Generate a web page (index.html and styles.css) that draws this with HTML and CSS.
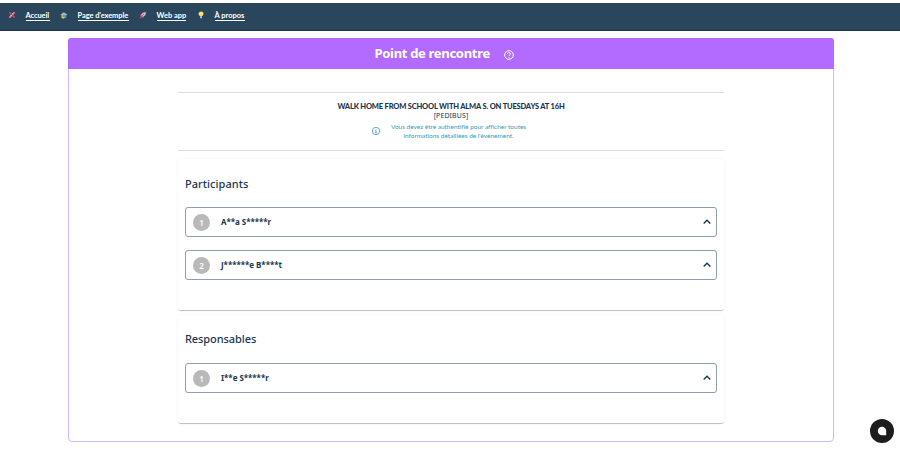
FILE: index.html
```html
<!DOCTYPE html>
<html lang="fr">
<head>
<meta charset="utf-8">
<title>Point de rencontre</title>
<link rel="stylesheet" href="styles.css">
</head>
<body>
<nav class="nav">
  <svg class="nav-icon" viewBox="0 0 8 8"><path d="M1.5 6.5 6.3 1.5" stroke="#e9edf2" stroke-width="1.4"/><path d="M1.4 1.3 6.6 6.5" stroke="#df4262" stroke-width="1.6"/><path d="M5.2 2.7 6.7 1.2M1.2 6.8 2.7 5.3" stroke="#e35c78" stroke-width="1.5"/></svg>
  <a class="nav-link home">Accueil</a>
  <svg class="nav-icon" viewBox="0 0 8 8"><path d="M.4 3.7 3.7 1.2 7.4 3.6 6.4 4.5H1.600Z" fill="#9fb8c4"/><path d="M3 4.300h3.200v2.100l-1.500.8L3 6.500Z" fill="#6b98b0"/><path d="M2.300 4.200 2 6.400 4.300 7" stroke="#e3c35b" stroke-width="1.300"/></svg>
  <a class="nav-link page">Page d'exemple</a>
  <svg class="nav-icon" viewBox="0 0 8 8"><path d="M1.8 4 4 1.7 7.3.8 6.3 4.1 4 6.1Z" fill="#d9dce6"/><path d="M1.8 3.4.4 5l1.8-.2M4.2 5.5 3 7.4l2.3-1.3M5.5 1.3 7.4.7 6.8 2.7" fill="#df4868"/><path d="M1.2 6.9 3.4 4.5 4.7 3.2" stroke="#e65473" stroke-width="1.1"/><circle cx="4.9" cy="3.1" r=".7" fill="#5b8caf"/></svg>
  <a class="nav-link app">Web app</a>
  <svg class="nav-icon" viewBox="0 0 8 8"><path d="M3 5C1.4 3.9 1 1 4 .8s2.700 3.100 1 4.200Z" fill="#ffe36c" stroke="#f3cd50" stroke-width=".5"/><path d="M3.200 5.200h1.700v2H3.200Z" fill="#cbd5d7"/></svg>
  <a class="nav-link about">À propos</a>
</nav>
<main class="card">
  <header class="card-header">
    <h1>Point de rencontre</h1>
    <svg class="help" viewBox="0 0 10 10"><circle cx="5" cy="5" r="4.300"/><path d="M3.500 4C3.600 2.100 6.500 2.200 6.500 3.900 6.500 5 5 4.900 5 6.100M5 7v.9"/></svg>
  </header>
  <div class="content">
    <section class="event">
      <h2>WALK HOME FROM SCHOOL WITH ALMA S. ON TUESDAYS AT 16H</h2>
      <p class="kind">[PEDIBUS]</p>
      <div class="notice">
        <svg class="info" viewBox="0 0 10 10"><circle cx="5" cy="5" r="3.700"/><path d="M5 2.800v.8M4.300 4.500H5v2.300M4.200 6.900h1.700"/></svg>
        <p>Vous devez être authentifié pour afficher toutes<br>informations détaillées de l'événement.</p>
      </div>
    </section>
    <section class="group participants">
      <h3>Participants</h3>
      <div class="person"><span class="number">1</span><span class="name">A**a S*****r</span><svg class="chevron" viewBox="0 0 10 10"><path d="M1.700 6.500 5 3.300l3.300 3.200"/></svg></div>
      <div class="person"><span class="number">2</span><span class="name">J******e B****t</span><svg class="chevron" viewBox="0 0 10 10"><path d="M1.700 6.500 5 3.300l3.300 3.200"/></svg></div>
    </section>
    <section class="group leaders">
      <h3 class="leaders-title">Responsables</h3>
      <div class="person"><span class="number">1</span><span class="name">I**e S*****r</span><svg class="chevron" viewBox="0 0 10 10"><path d="M1.700 6.500 5 3.300l3.300 3.200"/></svg></div>
    </section>
  </div>
</main>
<button class="chat" aria-label="Chat"><svg viewBox="0 0 24 24"><path d="M16.200 16.200H12a4.200 4.200 0 1 1 4.200-4.200Z"/></svg></button>
</body>
</html>
```
FILE: styles.css
```css
* { box-sizing: border-box; }
body { margin: 0; padding-top: 3px; height: 450px; overflow: hidden; background: #fff; color: #193750; font-family: "Noto Sans", sans-serif; }
h1, h2, h3, p { margin: 0; white-space: nowrap; }
svg { display: block; fill: none; flex: none; }
.nav { height: 28px; padding: 8px 7.500px 0; display: flex; align-items: flex-start; background: #29465d; border-bottom: 1px solid #193750; }
.nav-icon { width: 8px; height: 8px; }
.nav-link { height: 11px; margin: -1px 10px 0 10px; border-bottom: 1px solid #fff; color: #fff; font: 700 7.500px/11px Lato, sans-serif; white-space: nowrap; }
.home { width: 24px; letter-spacing: -.1px; }
.page { width: 51px; letter-spacing: -.08px; }
.app { width: 29px; margin-right: 11px; }
.about { width: 30px; }
.card { width: 766px; height: 404px; margin: 7px 0 0 68px; border: 1px solid #d8b5ff; border-radius: 4px; }
.card-header { height: 31px; margin: -1px -1px 0; padding-left: 306.500px; display: flex; align-items: center; background: #b36bff; border-radius: 3px 3px 0 0; color: #fff; }
h1 { width: 129px; font-size: 13px; line-height: 31px; letter-spacing: -.31px; font-weight: 700; }
.help { width: 10px; height: 10px; margin-top: 3px; stroke: #fff; stroke-width: 1; }
.content { width: 546px; margin: 23px 0 0 109px; }
.event { height: 59px; border-top: 1px solid #dedede; border-bottom: 1px solid #dedede; text-align: center; padding-top: 8px; }
h2 { font: 900 7.500px/11px Lato, sans-serif; letter-spacing: -.17px; }
.kind { font-size: 7px; line-height: 8px; letter-spacing: .1px; }
.notice { display: flex; align-items: center; margin: 1.500px 0 0 193px; color: #3b9bb7; font: 6.500px/9px Lato, sans-serif; }
.notice p { letter-spacing: -.02px; }
.info { width: 10px; height: 10px; margin-right: 10px; stroke: currentColor; stroke-width: .8; }
.group { padding: 18px 7px 0; border-bottom: 1px solid #c4c4c4; box-shadow: 0 0 2px #ededed; border-radius: 3px; }
.participants { height: 152px; margin-top: 8px; }
.leaders { height: 109px; margin-top: 4px; padding-top: 16px; }
h3 { height: 30px; font-size: 11px; line-height: 14px; font-weight: 500; letter-spacing: .05px; }
.leaders-title { height: 32px; line-height: 16px; letter-spacing: -.08px; }
.person { height: 30px; display: flex; align-items: center; border: 1px solid #8d9eae; border-radius: 3px; padding: 0 4px 0 7px; margin-bottom: 13px; }
.number { width: 17px; height: 17px; border-radius: 50%; background: #b9b9b9; color: #fff; text-align: center; font-size: 8px; line-height: 17px; font-weight: 600; }
.name { margin-left: 11px; font-size: 8px; line-height: 10px; font-weight: 700; letter-spacing: -.05px; }
.chevron { width: 10px; height: 10px; margin-left: auto; stroke: #193750; stroke-width: 1.400; }
.chat { position: absolute; left: 870px; top: 419px; width: 24px; height: 24px; padding: 0; border: 0; border-radius: 50%; background: #1d1d1d; }
.chat svg { width: 24px; height: 24px; fill: #fff; }
```
